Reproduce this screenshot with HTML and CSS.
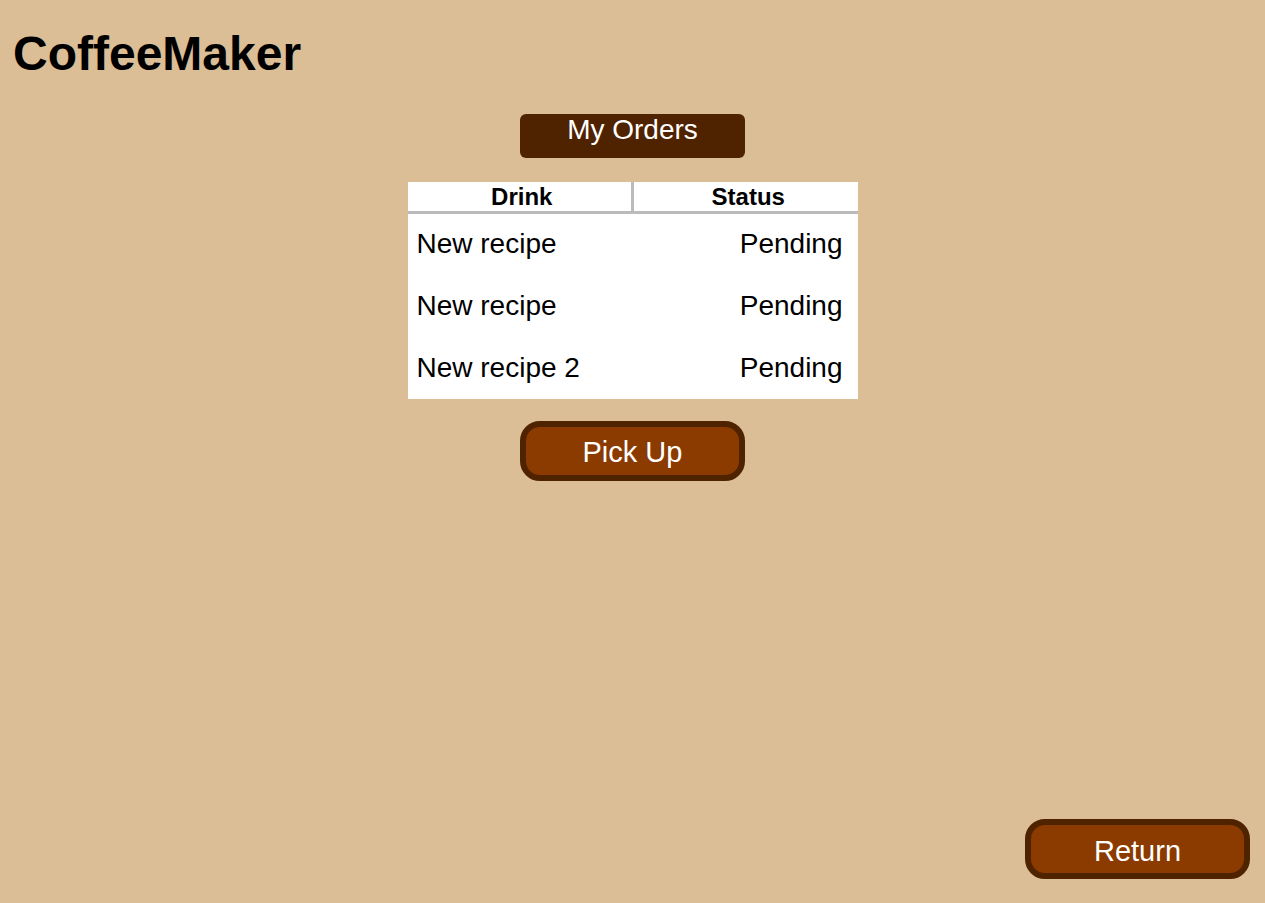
FILE: index.html
```html
<!DOCTYPE html>
<html lang="en">
<head>
<meta charset="utf-8">
<title>CoffeeMaker</title>
<link rel="stylesheet" href="styles.css">
</head>
<body>
<div class="page">
  <h1 class="title">CoffeeMaker</h1>
  <main class="content">
    <div class="section-label">My Orders</div>
    <table class="orders">
      <thead>
        <tr>
          <th class="col-drink">Drink</th>
          <th class="col-status">Status</th>
        </tr>
      </thead>
      <tbody>
        <tr><td class="drink">New recipe</td><td class="status">Pending</td></tr>
        <tr><td class="drink">New recipe</td><td class="status">Pending</td></tr>
        <tr><td class="drink">New recipe 2</td><td class="status">Pending</td></tr>
      </tbody>
    </table>
    <button class="btn" type="button">Pick Up</button>
  </main>
  <footer class="footer">
    <button class="btn" type="button">Return</button>
  </footer>
</div>
</body>
</html>
```

FILE: styles.css
```css
html, body {
  margin: 0;
  padding: 0;
  height: 100%;
}

body {
  background: #dbbd96;
  font-family: "Liberation Sans", Arial, sans-serif;
  color: #000;
}

.page {
  min-height: 100vh;
  box-sizing: border-box;
  display: flex;
  flex-direction: column;
  padding: 26px 15px 24px 13px;
}

.title {
  margin: 0;
  font-size: 48px;
  font-weight: bold;
  line-height: 55px;
}

.content {
  display: flex;
  flex-direction: column;
  align-items: center;
  padding-top: 33px;
  padding-left: 2px;
}

.section-label {
  width: 225px;
  height: 44px;
  box-sizing: border-box;
  background: #4f2200;
  color: #fff;
  border-radius: 6px;
  text-align: center;
  font-size: 28px;
  line-height: 32px;
}

.orders {
  margin-top: 24px;
  width: 450px;
  border-collapse: collapse;
  background: #fff;
  table-layout: fixed;
}

.orders th {
  font-size: 24px;
  font-weight: bold;
  line-height: 29px;
  padding: 0 0 0 5px;
  border-bottom: 3px solid #bbbbbb;
  text-align: center;
}

.orders .col-drink {
  border-right: 3px solid #bbbbbb;
}

.orders td {
  font-size: 28px;
  line-height: 32px;
  height: 62px;
  padding: 0;
  box-sizing: border-box;
}

.orders .drink {
  padding-left: 9px;
  text-align: left;
}

.orders .status {
  padding-right: 15px;
  text-align: right;
}

.btn {
  margin-top: 22px;
  width: 225px;
  height: 60px;
  box-sizing: border-box;
  background: #8b3a00;
  border: 6px solid #4f2200;
  border-radius: 20px;
  color: #fff;
  font-family: "Liberation Sans", Arial, sans-serif;
  font-size: 29px;
  line-height: 32px;
  padding: 3px 0 0;
  cursor: pointer;
}

.footer {
  margin-top: auto;
  display: flex;
  justify-content: flex-end;
}

.footer .btn {
  margin-top: 0;
}
```
